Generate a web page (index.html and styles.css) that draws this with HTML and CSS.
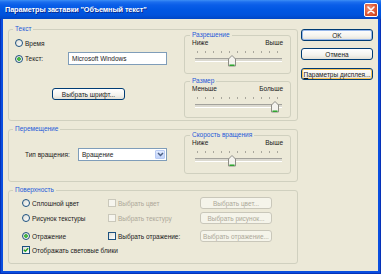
FILE: index.html
```html
<!DOCTYPE html>
<html lang="ru">
<head>
<meta charset="utf-8">
<title>Параметры заставки</title>
<link rel="stylesheet" href="styles.css">
</head>
<body>
<div class="window">
  <div class="titlebar">
    <span class="title">Параметры заставки "Объемный текст"</span>
    <span class="close"><svg width="8" height="8" viewBox="0 0 8 8"><path d="M1 1L7 7M7 1L1 7" stroke="#fff" stroke-width="1.6" stroke-linecap="round"/></svg></span>
  </div>
  <div class="frame">
    <div class="body">
      <div class="main">
        <fieldset class="group g-text">
          <legend>Текст</legend>
          <div class="group-inner">
            <div class="text-left">
              <div class="opt row-time"><span class="radio"></span><span>Время</span></div>
              <div class="opt row-text"><span class="radio on"></span><span class="opt-label">Текст:</span><span class="input">Microsoft Windows</span></div>
              <div class="btn font-btn">Выбрать шрифт...</div>
            </div>
            <div class="side">
              <fieldset class="group sub sub-first">
                <legend>Разрешение</legend>
                <div class="ends"><span>Ниже</span><span>Выше</span></div>
                <div class="slider"><div class="ticks"></div><div class="track"></div>
                  <svg class="thumb" style="left:33px" width="8" height="12" viewBox="0 0 8 12"><path d="M4 0.5L7.5 4V11H0.5V4Z" fill="#F4F3EE" stroke="#8E8D86"/><path d="M1.5 10.2H6.5" stroke="#21A121" stroke-width="1.4"/></svg>
                </div>
              </fieldset>
              <fieldset class="group sub sub-second">
                <legend>Размер</legend>
                <div class="ends"><span>Меньше</span><span>Больше</span></div>
                <div class="slider"><div class="ticks"></div><div class="track"></div>
                  <svg class="thumb" style="left:76px" width="8" height="12" viewBox="0 0 8 12"><path d="M4 0.5L7.5 4V11H0.5V4Z" fill="#F4F3EE" stroke="#8E8D86"/><path d="M1.5 10.2H6.5" stroke="#21A121" stroke-width="1.4"/></svg>
                </div>
              </fieldset>
            </div>
          </div>
        </fieldset>

        <fieldset class="group g-move">
          <legend>Перемещение</legend>
          <div class="group-inner">
            <div class="move-left">
              <span class="field-label">Тип вращения:</span>
              <span class="select"><span class="select-text">Вращение</span><span class="select-btn"><svg width="7" height="5" viewBox="0 0 7 5"><path d="M1 1L3.5 3.5L6 1" fill="none" stroke="#4D6185" stroke-width="1.5"/></svg></span></span>
            </div>
            <div class="side">
              <fieldset class="group sub sub-first">
                <legend>Скорость вращения</legend>
                <div class="ends"><span>Ниже</span><span>Выше</span></div>
                <div class="slider"><div class="ticks"></div><div class="track"></div>
                  <svg class="thumb" style="left:33px" width="8" height="12" viewBox="0 0 8 12"><path d="M4 0.5L7.5 4V11H0.5V4Z" fill="#F4F3EE" stroke="#8E8D86"/><path d="M1.5 10.2H6.5" stroke="#21A121" stroke-width="1.4"/></svg>
                </div>
              </fieldset>
            </div>
          </div>
        </fieldset>

        <fieldset class="group g-surface">
          <legend>Поверхность</legend>
          <div class="surface">
            <div class="srow r1">
              <div class="opt"><span class="radio"></span><span>Сплошной цвет</span></div>
              <div class="opt disabled"><span class="check off"></span><span>Выбрать цвет</span></div>
              <div class="btn small disabled">Выбрать цвет...</div>
            </div>
            <div class="srow r2">
              <div class="opt"><span class="radio"></span><span>Рисунок текстуры</span></div>
              <div class="opt disabled"><span class="check off"></span><span>Выбрать текстуру</span></div>
              <div class="btn small disabled">Выбрать рисунок...</div>
            </div>
            <div class="srow r3">
              <div class="opt"><span class="radio on"></span><span>Отражение</span></div>
              <div class="opt"><span class="check"></span><span>Выбрать отражение:</span></div>
              <div class="btn small disabled">Выбрать отражение...</div>
            </div>
            <div class="srow r4">
              <div class="opt wide"><span class="check"><svg width="6" height="6" viewBox="0 0 6 6"><path d="M0.8 2.8L2.3 4.3L5.2 1.2" fill="none" stroke="#21A121" stroke-width="1.4"/></svg></span><span>Отображать световые блики</span></div>
            </div>
          </div>
        </fieldset>
      </div>

      <div class="buttons">
        <div class="btn default">OK</div>
        <div class="btn cancel">Отмена</div>
        <div class="btn focus"><span><u>П</u>араметры дисплея...</span></div>
      </div>
    </div>
  </div>
</div>
</body>
</html>
```

FILE: styles.css
```css
html, body {
  margin: 0;
  padding: 0;
}
body {
  width: 381px;
  height: 274px;
  overflow: hidden;
  font-family: "Liberation Sans", Arial, sans-serif;
  font-size: 6.5px;
  color: #1A1A1A;
  background: #fff;
}
.window {
  width: 381px;
  height: 274px;
  display: flex;
  flex-direction: column;
}
.titlebar {
  height: 19px;
  flex: none;
  display: flex;
  align-items: center;
  justify-content: space-between;
  padding: 0 3px 0 5px;
  background: linear-gradient(to bottom, #3D8FF5 0, #1C6EEE 2px, #0A5EE8 5px, #0056E2 10px, #0052DC 15px, #0046C6 19px);
}
.title {
  color: #fff;
  font-weight: bold;
  font-size: 7.3px;
  letter-spacing: -0.1px;
  text-shadow: 1px 1px 0 #0B2A8C;
}
.close {
  width: 14px;
  height: 14px;
  box-sizing: border-box;
  border: 1px solid #fff;
  border-radius: 2px;
  background: radial-gradient(circle at 35% 35%, #F1967A 0, #E2613F 45%, #C23A13 100%);
  display: flex;
  align-items: center;
  justify-content: center;
}
.frame {
  flex: 1;
  display: flex;
  padding: 0 3px 3px 3px;
  background: #0A4EDF;
  box-shadow: inset 1px 0 0 #0632B8, inset -1px 0 0 #0632B8, inset 0 -1px 0 #0632B8;
}
.body {
  flex: 1;
  display: flex;
  gap: 3px;
  padding: 5px 0 0 5px;
  background: #ECE9D8;
}
.main {
  width: 290px;
  display: flex;
  flex-direction: column;
}

/* group boxes */
.group {
  margin: 0;
  padding: 0;
  min-width: 0;
  box-sizing: border-box;
  border: 1px solid #D0D0BF;
  border-radius: 3px;
}
.group legend {
  padding: 0 2px;
  margin-left: 4px;
  line-height: 10px;
  color: #1F5AD8;
}
.g-text { height: 97px; }
.g-move { height: 58px; margin-top: 3px; }
.g-surface { height: 79px; margin-top: 3px; }
.group-inner {
  display: flex;
  padding-right: 6px;
}
.side {
  width: 107px;
  flex: none;
  margin-top: -4px;
}
.sub { height: 44px; }
.sub legend { margin-left: 5px; }
.sub-second { height: 42px; margin-top: 2px; }
.ends {
  display: flex;
  justify-content: space-between;
  padding: 0 7px;
  line-height: 8px;
  margin-top: -1px;
}
.slider {
  position: relative;
  height: 16px;
  margin: 4px 8px 0 10px;
}
.ticks {
  height: 2px;
  margin: 3px 2px 0;
  background: repeating-linear-gradient(to right, #A9A79C 0, #A9A79C 1px, transparent 1px, transparent 8px);
}
.track {
  height: 2px;
  margin-top: 5px;
  border-top: 1px solid #A3A29C;
  border-bottom: 1px solid #fff;
  background: #DCDAD0;
}
.thumb {
  position: absolute;
  top: 4px;
}

/* text group left */
.text-left {
  flex: 1;
  padding-left: 6px;
}
.opt {
  display: flex;
  align-items: center;
  white-space: nowrap;
}
.row-time { margin-top: 4px; height: 10px; }
.row-text { margin-top: 4px; height: 13px; }
.opt-label { width: 43px; }
.radio {
  width: 8px;
  height: 8px;
  box-sizing: border-box;
  border: 1px solid #1C5180;
  border-radius: 50%;
  margin-right: 2px;
  flex: none;
  background: linear-gradient(135deg, #DCDCD4, #FFFFFF);
}
.radio.on {
  background: radial-gradient(circle, #6BD46B 0, #21A121 1.4px, transparent 2.2px), linear-gradient(135deg, #DCDCD4, #FFFFFF);
}
.check {
  width: 8px;
  height: 8px;
  box-sizing: border-box;
  border: 1px solid #1C5180;
  margin-right: 2px;
  flex: none;
  display: flex;
  align-items: center;
  justify-content: center;
  background: linear-gradient(135deg, #DCDCD4, #FFFFFF);
}
.check.off {
  border-color: #CAC8BB;
  background: #F6F5EE;
}
.input {
  width: 99px;
  height: 13px;
  box-sizing: border-box;
  border: 1px solid #7F9DB9;
  background: #fff;
  padding-left: 3px;
  line-height: 11px;
}
.btn {
  box-sizing: border-box;
  height: 12px;
  border: 1px solid #003C74;
  border-radius: 3px;
  background: linear-gradient(to bottom, #FFFFFF 0, #F4F3EE 60%, #E3E0D6 100%);
  display: flex;
  align-items: center;
  justify-content: center;
  white-space: nowrap;
}
.font-btn {
  width: 73px;
  margin-top: 23px;
  margin-left: 37px;
}

/* move group */
.move-left {
  flex: 1;
  display: flex;
  align-items: center;
  height: 13px;
  margin-top: 14px;
  padding-left: 16px;
}
.field-label { width: 53px; }
.select {
  width: 89px;
  height: 13px;
  box-sizing: border-box;
  border: 1px solid #7F9DB9;
  background: #fff;
  display: flex;
  align-items: center;
  justify-content: space-between;
  padding: 0 1px 0 3px;
}
.select-btn {
  width: 10px;
  height: 9px;
  box-sizing: border-box;
  border: 1px solid #B9CBF3;
  border-radius: 1px;
  background: linear-gradient(to bottom, #E1EAFE, #C1D3FB);
  display: flex;
  align-items: center;
  justify-content: center;
}

/* surface group */
.surface { padding-left: 13px; }
.srow {
  display: grid;
  grid-template-columns: 86px 92px 72px;
  align-items: center;
  height: 12px;
}
.r1 { margin-top: 2px; }
.r2 { margin-top: 3px; }
.r3 { margin-top: 6px; }
.r4 { margin-top: 3px; height: 10px; }
.wide { grid-column: 1 / 4; }
.disabled { color: #ACA899; }
.btn.disabled {
  border-color: #C9C7BA;
  background: #F5F4EA;
}

/* buttons column */
.buttons {
  width: 72px;
  display: flex;
  flex-direction: column;
}
.default {
  margin-top: 5px;
  box-shadow: inset 0 0 0 1px #98B8EA;
}
.cancel { margin-top: 7px; }
.focus {
  margin-top: 8px;
  box-shadow: inset 0 0 0 1px #F8C45A;
}
```
